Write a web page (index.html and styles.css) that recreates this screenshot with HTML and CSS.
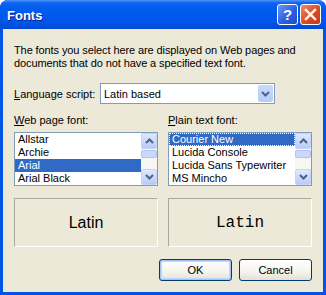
FILE: index.html
```html
<!DOCTYPE html>
<html lang="en">
<head>
    <meta charset="UTF-8">
    <meta name="viewport" content="width=device-width, initial-scale=1.0">
    <title>Fonts</title>
    <link rel="stylesheet" href="styles.css">
</head>
<body>

<div class="window">
    <div class="titlebar">
        <span class="title">Fonts</span>
        <div class="controls">
            <span class="ctl help">?</span>
            <span class="ctl close">
                <svg width="13" height="13" viewBox="0 0 13 13"><path d="M2 2 L11 11 M11 2 L2 11" stroke="#fff" stroke-width="2.4" stroke-linecap="square"/></svg>
            </span>
        </div>
    </div>

    <div class="body">
        <p class="intro">The fonts you select here are displayed on Web pages and<br>documents that do not have a specified text font.</p>

        <div class="lang-row">
            <label><u>L</u>anguage script:</label>
            <div class="select">
                <span class="select-value">Latin based</span>
                <span class="drop">
                    <svg width="9" height="6" viewBox="0 0 9 6"><path d="M1 1 L4.5 4.5 L8 1" fill="none" stroke="#4d6185" stroke-width="2"/></svg>
                </span>
            </div>
        </div>

        <div class="columns">
            <div class="col">
                <label><u>W</u>eb page font:</label>
                <div class="listbox">
                    <ul class="items">
                        <li>Allstar</li>
                        <li>Archie</li>
                        <li class="selected">Arial</li>
                        <li>Arial Black</li>
                    </ul>
                    <div class="scrollbar">
                        <span class="sb-btn"><svg width="9" height="6" viewBox="0 0 9 6"><path d="M1 5 L4.5 1.5 L8 5" fill="none" stroke="#4d6185" stroke-width="2"/></svg></span>
                        <span class="sb-track"><span class="sb-thumb"></span></span>
                        <span class="sb-btn"><svg width="9" height="6" viewBox="0 0 9 6"><path d="M1 1 L4.5 4.5 L8 1" fill="none" stroke="#4d6185" stroke-width="2"/></svg></span>
                    </div>
                </div>
            </div>
            <div class="col">
                <label><u>P</u>lain text font:</label>
                <div class="listbox">
                    <ul class="items">
                        <li class="selected focused">Courier New</li>
                        <li>Lucida Console</li>
                        <li>Lucida Sans Typewriter</li>
                        <li>MS Mincho</li>
                    </ul>
                    <div class="scrollbar">
                        <span class="sb-btn"><svg width="9" height="6" viewBox="0 0 9 6"><path d="M1 5 L4.5 1.5 L8 5" fill="none" stroke="#4d6185" stroke-width="2"/></svg></span>
                        <span class="sb-track"><span class="sb-thumb"></span></span>
                        <span class="sb-btn"><svg width="9" height="6" viewBox="0 0 9 6"><path d="M1 1 L4.5 4.5 L8 1" fill="none" stroke="#4d6185" stroke-width="2"/></svg></span>
                    </div>
                </div>
            </div>
        </div>

        <div class="columns previews">
            <div class="preview sans">Latin</div>
            <div class="preview mono">Latin</div>
        </div>

        <div class="buttons">
            <button class="btn default">OK</button>
            <button class="btn">Cancel</button>
        </div>
    </div>
</div>

</body>
</html>
```

FILE: styles.css
```css
body {
    margin: 0;
    font-family: Tahoma, "Liberation Sans", sans-serif;
    font-size: 11px;
    color: #000;
    background: #fff;
}
.window {
    width: 326px;
    height: 295px;
    background: #0055e5;
    border-radius: 8px 8px 0 0;
    display: flex;
    flex-direction: column;
    overflow: hidden;
}
.titlebar {
    height: 29px;
    display: flex;
    align-items: center;
    justify-content: space-between;
    padding: 0 5px 0 7px;
    background: linear-gradient(to bottom, #4a96fb 0px, #0f63ee 3px, #005cf2 8px, #0058ec 20px, #004fdf 26px, #0046d2 29px);
}
.title {
    font-family: "Liberation Sans", sans-serif;
    font-weight: bold;
    font-size: 13px;
    color: #fff;
    text-shadow: 1px 1px 0 #0a1e8a;
    margin-top: 1px;
}
.controls {
    display: flex;
    gap: 2px;
}
.ctl {
    width: 19px;
    height: 19px;
    border: 1px solid #fff;
    border-radius: 3px;
    display: flex;
    align-items: center;
    justify-content: center;
    color: #fff;
}
.help {
    background: linear-gradient(135deg, #6d97f8 0%, #2b5fe3 55%, #1f49cc 100%);
    font-family: "Liberation Sans", sans-serif;
    font-weight: bold;
    font-size: 15px;
}
.close {
    background: linear-gradient(135deg, #f08a6a 0%, #dd4a22 55%, #c2361a 100%);
}
.body {
    flex: 1;
    margin: 0 3px 3px 3px;
    background: #ece9d8;
    padding: 15px 10px 0 11px;
}
.intro {
    margin: 0;
    line-height: 13px;
    letter-spacing: -0.1px;
}
.lang-row {
    display: flex;
    align-items: center;
    margin-top: 13px;
}
.lang-row label {
    width: 86px;
}
.select {
    width: 173px;
    height: 19px;
    border: 1px solid #7f9db9;
    background: #fff;
    display: flex;
    align-items: center;
    justify-content: space-between;
}
.select-value {
    padding-left: 3px;
}
.drop {
    width: 15px;
    height: 17px;
    margin-right: 1px;
    border-radius: 2px;
    background: linear-gradient(to bottom, #c9d9fc, #b6cbf7);
    display: flex;
    align-items: center;
    justify-content: center;
}
.columns {
    display: grid;
    grid-template-columns: 144px 144px;
    gap: 10px;
}
.col label {
    display: block;
    line-height: 13px;
    margin-top: 10px;
}
.listbox {
    margin-top: 5px;
    height: 52px;
    border: 1px solid #7f9db9;
    background: #fff;
    display: flex;
}
.items {
    list-style: none;
    margin: 0;
    padding: 0;
    flex: 1;
}
.items li {
    height: 13px;
    line-height: 13px;
    padding-left: 3px;
}
.items li.selected {
    background: #316ac5;
    color: #fff;
}
.items li.focused {
    outline: 1px dotted #fff;
    outline-offset: -1px;
}
.scrollbar {
    width: 16px;
    display: flex;
    flex-direction: column;
    background: #f7f7f2;
}
.sb-btn {
    height: 16px;
    border: 1px solid #c3d3fd;
    border-radius: 2px;
    background: linear-gradient(to bottom, #dfe8fe, #b8cbf6);
    display: flex;
    align-items: center;
    justify-content: center;
    box-sizing: border-box;
}
.sb-track {
    flex: 1;
    padding-top: 1px;
}
.sb-thumb {
    display: block;
    height: 6px;
    border: 1px solid #b0c4f2;
    border-radius: 2px;
    background: #c9d8fb;
}
.previews {
    margin-top: 12px;
}
.preview {
    height: 47px;
    border: 1px solid #aca899;
    border-right-color: #fff;
    border-bottom-color: #fff;
    display: flex;
    align-items: center;
    justify-content: center;
}
.sans {
    font-family: Tahoma, "Liberation Sans", sans-serif;
    font-size: 16px;
}
.mono {
    font-family: "Liberation Mono", monospace;
    font-size: 16px;
}
.buttons {
    display: flex;
    justify-content: flex-end;
    gap: 7px;
    margin-top: 12px;
    padding-right: 1px;
}
.btn {
    width: 73px;
    height: 22px;
    font-family: Tahoma, "Liberation Sans", sans-serif;
    font-size: 11px;
    color: #000;
    border: 1px solid #003c74;
    border-radius: 3px;
    background: linear-gradient(to bottom, #ffffff 0%, #f4f3ee 60%, #e3e1d6 100%);
    padding: 0;
}
.btn.default {
    box-shadow: inset 0 0 0 1px #a9c3f0, inset 0 0 0 2px #c6d7f5;
}
```
